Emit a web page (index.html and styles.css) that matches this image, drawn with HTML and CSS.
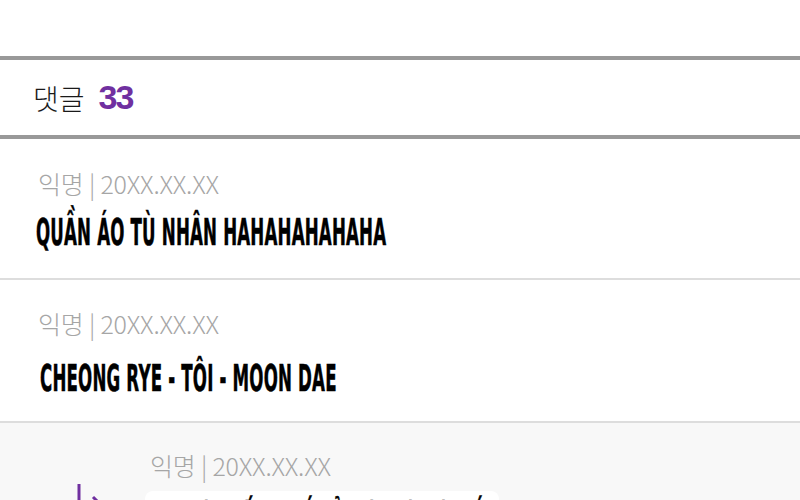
FILE: index.html
```html
<!DOCTYPE html>
<html>
    <head>
        <meta charset="UTF-8">
        <title>댓글</title>
        <link rel="stylesheet" href="styles.css">
    </head>
    <body>
        <div class="page">
            <div class="top-space"></div>
            <div class="comments-head">
                <span class="head-label">댓글</span>
                <span class="count">33</span>
            </div>
            <ul class="comment-list">
                <li class="comment">
                    <div class="meta">익명 | 20XX.XX.XX</div>
                    <div class="text"><span>QUẦN ÁO TÙ NHÂN HAHAHAHAHAHA</span></div>
                </li>
                <li class="comment">
                    <div class="meta">익명 | 20XX.XX.XX</div>
                    <div class="text"><span>CHEONG RYE - TÔI - MOON DAE</span></div>
                </li>
                <li class="comment reply">
                    <svg class="reply-arrow" width="30" height="40" viewBox="0 0 30 40">
                        <path d="M3 1 V22 H24" fill="none" stroke="#7030a0" stroke-width="3"/>
                        <path d="M17 14 L25 22 L17 30" fill="none" stroke="#7030a0" stroke-width="3"/>
                    </svg>
                    <div class="reply-body">
                        <div class="meta">익명 | 20XX.XX.XX</div>
                        <div class="bubble">
                            <div class="text"><span>NGƯỜI TỐT NHẤT Ở ĐÂY LÀ CẬU ẤY</span></div>
                        </div>
                    </div>
                </li>
            </ul>
        </div>
    </body>
</html>
```

FILE: styles.css
```css
body{
    margin:0;
    background-color:#ffffff;
    font-family: "Noto Sans CJK KR", "Noto Sans", sans-serif;
}

ul{
    list-style:none;
    margin:0;
    padding:0;
}

.page{
    width:800px;
    height:500px;
    overflow:hidden;
}

.top-space{
    height:56px;
}

.comments-head{
    height:75px;
    border-top:4px solid #999999;
    border-bottom:4px solid #999999;
    display:flex;
    align-items:center;
    padding-left:33px;
    gap:14px;
}

.head-label{
    font-size:28px;
    font-weight:300;
    color:#1a1a1a;
}

.count{
    font-family: "Liberation Sans", sans-serif;
    font-size:34px;
    font-weight:bold;
    color:#7030a0;
    letter-spacing:-2px;
}

.comment{
    height:110px;
    padding:29px 0 0 38px;
    border-bottom:2px solid #dddddd;
}

.comment:nth-child(2){
    height:113px;
    padding-top:28px;
}

.meta{
    font-size:25px;
    line-height:30px;
    font-weight:300;
    color:#a6a6a6;
    letter-spacing:-0.2px;
}

.text{
    margin-top:15px;
    height:40px;
    white-space:nowrap;
}

.text span{
    display:inline-block;
    font-family: "DejaVu Sans", sans-serif;
    font-weight:bold;
    font-size:37px;
    line-height:40px;
    color:#000000;
    -webkit-text-stroke:0.6px #000000;
    letter-spacing:0.4px;
    transform:scaleX(0.45);
    transform-origin:left center;
    margin-left:-2px;
}

.comment:nth-child(2) .text{
    margin-top:21px;
}

.comment:nth-child(2) .text span{
    margin-left:2px;
}

.reply{
    background-color:#f8f8f8;
    border-bottom:none;
    display:flex;
    padding:27px 0 0 76px;
    height:200px;
}

.reply-arrow{
    margin-top:33px;
    flex:none;
}

.reply-body{
    margin-left:39px;
}

.reply-body .meta{
    padding-left:5px;
}

.bubble{
    margin-top:11px;
    width:322px;
    background-color:#ffffff;
    border-radius:8px;
    padding:12px 16px;
}

.bubble .text{
    margin-top:0;
}
```
